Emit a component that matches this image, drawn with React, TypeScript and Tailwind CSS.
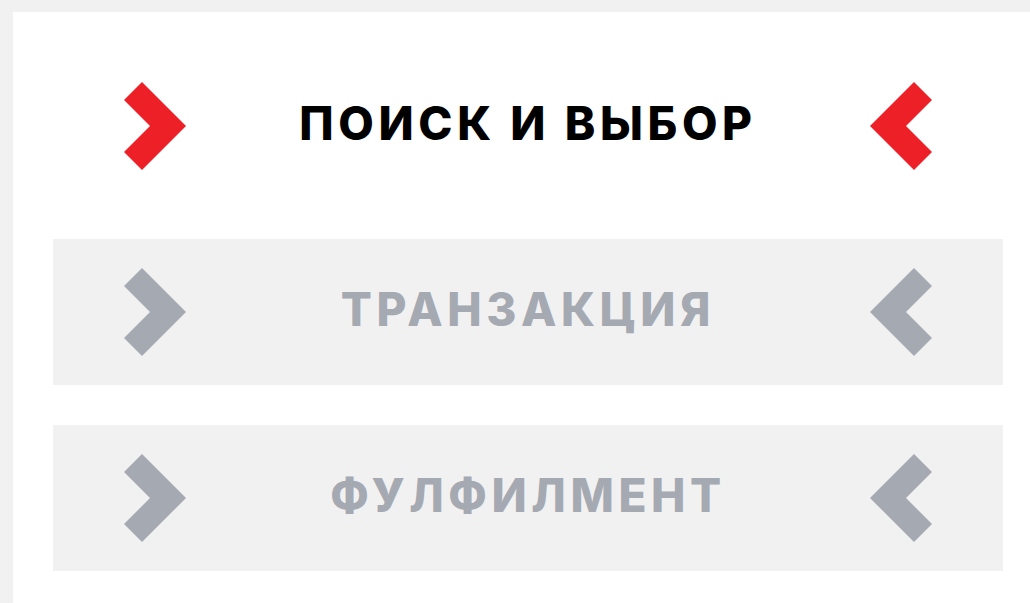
type Step = { title: string; active?: boolean };

const steps: Step[] = [
  { title: "ПОИСК И ВЫБОР", active: true },
  { title: "ТРАНЗАКЦИЯ" },
  { title: "ФУЛФИЛМЕНТ" },
];

function Chevron({ dir, color }: { dir: "right" | "left"; color: string }) {
  const points =
    dir === "right"
      ? "18,0 62,44 18,88 0,70 26,44 0,18"
      : "44,0 62,18 36,44 62,70 44,88 0,44";
  return (
    <svg width="62" height="88" viewBox="0 0 62 88" className="shrink-0">
      <polygon points={points} fill={color} />
    </svg>
  );
}

export default function App() {
  return (
    <div className="min-h-screen bg-[#f1f1f1] pl-[13px] pt-[12px] overflow-hidden">
      <div className="bg-white min-h-[591px] pl-10 pr-[27px] pt-[41px] pb-8 flex flex-col gap-10">
        {steps.map((s) => {
          const color = s.active ? "#ed1f27" : "#a5a9b2";
          return (
            <div
              key={s.title}
              className={`h-[146px] flex items-center justify-between px-[71px] ${
                s.active ? "bg-white" : "bg-[#f1f1f1]"
              }`}
            >
              <Chevron dir="right" color={color} />
              <span
                className={`flex-1 text-center font-extrabold text-[46px] tracking-[0.1em] leading-none pb-[6px] ${
                  s.active ? "text-black" : "text-[#a5a9b2]"
                }`}
                style={{ fontFamily: "Inter, 'Noto Sans', sans-serif" }}
              >
                {s.title}
              </span>
              <Chevron dir="left" color={color} />
            </div>
          );
        })}
      </div>
    </div>
  );
}
